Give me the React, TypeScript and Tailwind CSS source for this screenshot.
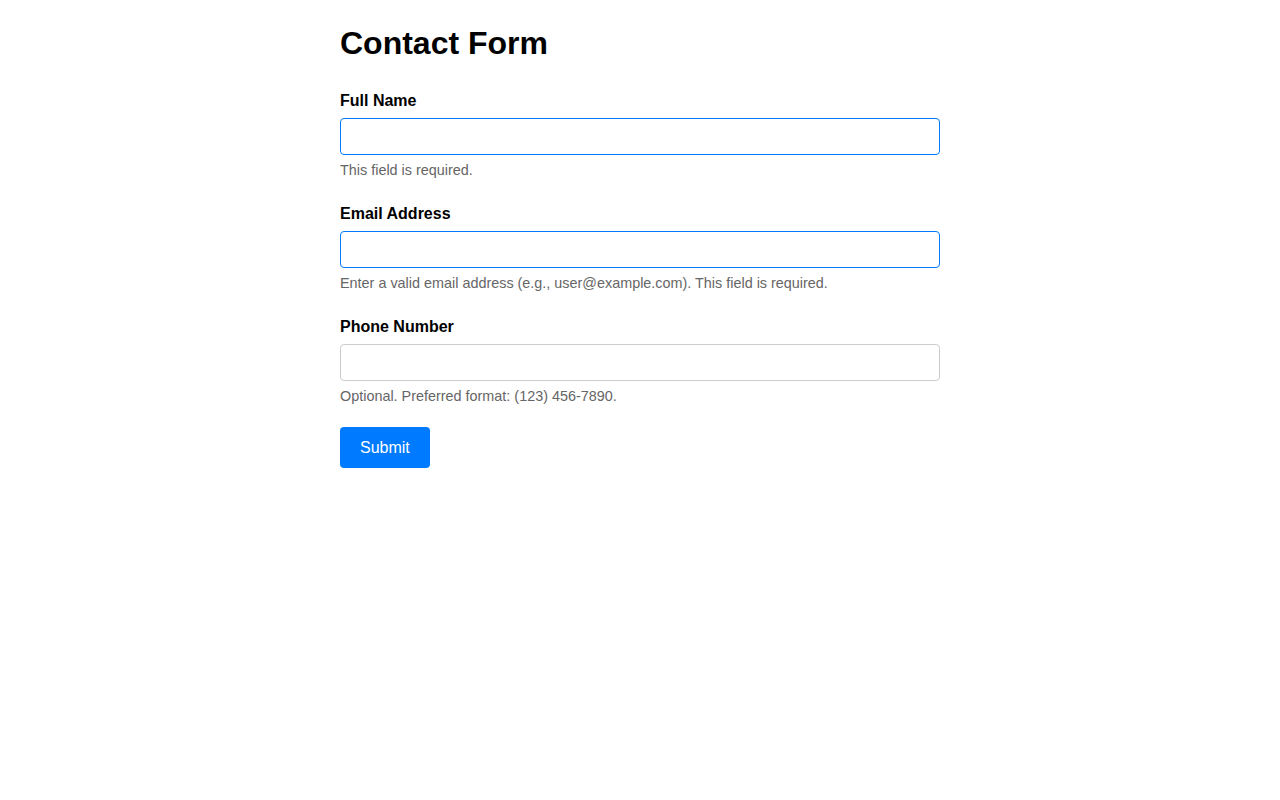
import React from 'react';

interface FieldProps {
  id: string;
  label: string;
  type: string;
  help: string;
  active?: boolean;
}

const Field: React.FC<FieldProps> = ({ id, label, type, help, active }) => (
  <div className="mb-[27px]">
    <label htmlFor={id} className="block mb-[8px] text-base leading-[18px] font-bold text-black">
      {label}
    </label>
    <input
      id={id}
      type={type}
      className={`block w-full h-[37px] px-2 rounded-[4px] border bg-white text-base outline-none ${
        active ? 'border-[#007bff]' : 'border-[#cccccc]'
      }`}
    />
    <p className="mt-[7px] text-[14.4px] leading-[16px] text-[#666666]">{help}</p>
  </div>
);

export default function App() {
  return (
    <div className="min-h-screen bg-white font-['Liberation_Sans',Arial,sans-serif]">
      <div className="mx-auto w-[600px] pt-[25px]">
        <h1 className="text-[32px] leading-[37px] font-bold text-black mb-[30px]">Contact Form</h1>
        <form onSubmit={(e) => e.preventDefault()}>
          <Field id="name" label="Full Name" type="text" help="This field is required." active />
          <Field
            id="email"
            label="Email Address"
            type="email"
            help="Enter a valid email address (e.g., user@example.com). This field is required."
            active
          />
          <Field id="phone" label="Phone Number" type="tel" help="Optional. Preferred format: (123) 456-7890." />
          <button
            type="submit"
            className="-mt-[4px] h-[41px] px-5 rounded-[4px] bg-[#007bff] text-white text-base"
          >
            Submit
          </button>
        </form>
      </div>
    </div>
  );
}
